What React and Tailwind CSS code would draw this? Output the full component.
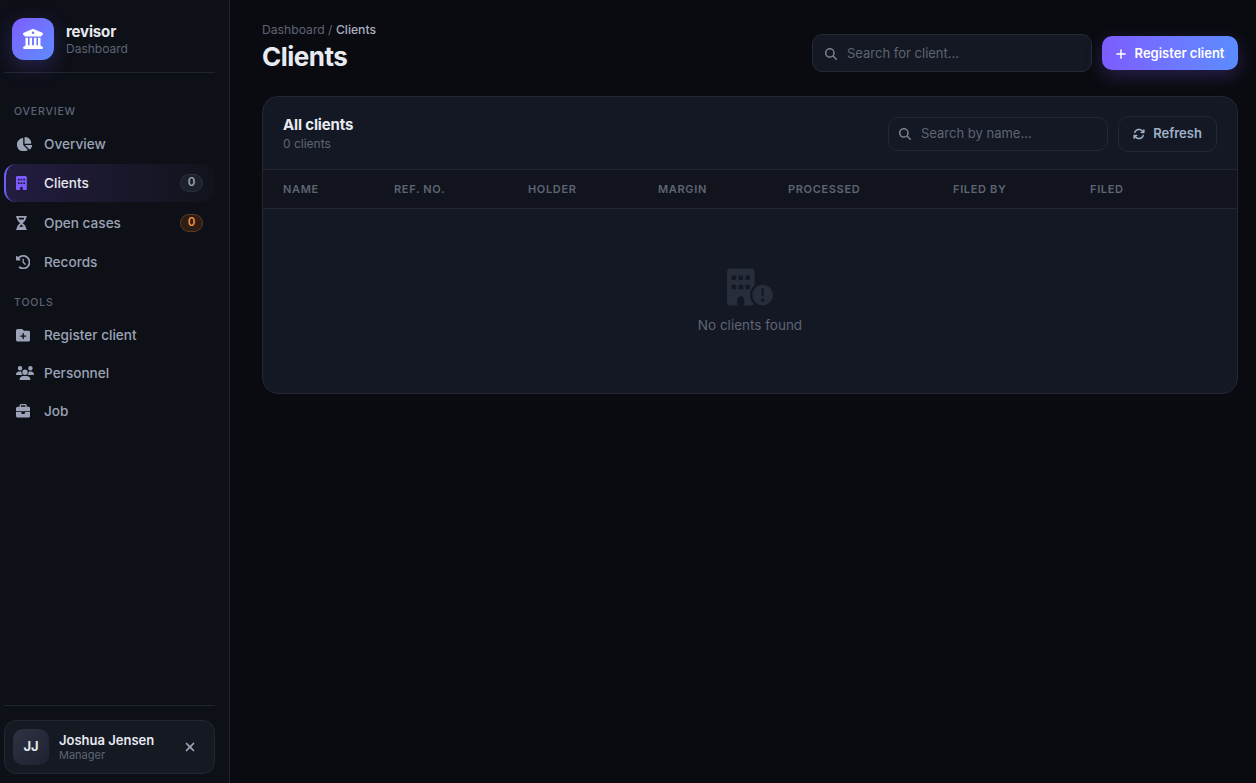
import {
  FaBuildingColumns, FaChartPie, FaBuilding, FaHourglassHalf, FaClockRotateLeft, FaFolderPlus,
  FaUsers, FaBriefcase, FaXmark, FaMagnifyingGlass, FaPlus, FaArrowsRotate, FaBuildingCircleExclamation,
} from 'react-icons/fa6';

function NavItem({ icon: Icon, width, label, badge, active, orange }) {
  return (
    <div
      className={`h-[38px] flex items-center pr-3 text-[13.6px] font-medium rounded-[12px] ${badge ? 'my-px' : ''} ${
        active
          ? 'text-[#e6e8f0] border-l-2 border-[#6d5ef5] pl-[10px] bg-gradient-to-r from-[#231c40] to-[#11131b]'
          : 'text-[#9ca3b6] pl-3'
      }`}
    >
      <span className={`w-[28px] flex ${active ? 'text-[#7c5cff]' : ''}`}>
        <Icon className={`h-[14.4px] ${width}`} />
      </span>
      <span className="flex-1">{label}</span>
      {badge && (
        <span
          className={`w-[23px] h-[18px] rounded-full border flex items-center justify-center text-[11.5px] font-semibold ${
            orange ? 'bg-[#2e1d14] border-[#5c3a20] text-[#f5923e]' : 'bg-[#1c212c] border-[#2a303c] text-[#9ca3b6]'
          }`}
        >
          {badge}
        </span>
      )}
    </div>
  );
}

function SectionLabel({ children, className }) {
  return <div className={`px-[10px] text-[10.5px] font-medium tracking-[0.08em] text-[#5d6475] ${className}`}>{children}</div>;
}

const columns = [
  ['NAME', 'w-[111px]'],
  ['REF. NO.', 'w-[134px]'],
  ['HOLDER', 'w-[130px]'],
  ['MARGIN', 'w-[130px]'],
  ['PROCESSED', 'w-[165px]'],
  ['FILED BY', 'w-[137px]'],
  ['FILED', 'w-[100px]'],
];

export default function App() {
  return (
    <div className="h-[783px] flex bg-[#0a0b10] overflow-hidden font-['Inter',sans-serif]">
      <aside className="w-[230px] shrink-0 bg-[#0d1017] border-r border-[#20242e] pl-[4px] pr-[14px] flex flex-col">
        <div className="h-[73px] border-b border-[#20242e] flex items-center pl-2 pt-[6px]">
          <div className="w-[42px] h-[42px] rounded-[12px] bg-gradient-to-br from-[#7c5cff] to-[#5b8cff] flex items-center justify-center text-white text-[20px] shadow-[0_6px_20px_rgba(124,92,255,0.25)]">
            <FaBuildingColumns />
          </div>
          <div className="ml-3 mt-[2px]">
            <div className="text-[15px] leading-[18px] font-bold tracking-[-0.01em] text-[#e8eaf2]">revisor</div>
            <div className="text-[12px] leading-[16px] text-[#5d6475]">Dashboard</div>
          </div>
        </div>

        <SectionLabel className="mt-[32px] mb-[7px] leading-[13px]">OVERVIEW</SectionLabel>
        <NavItem icon={FaChartPie} width="w-[16.2px]" label="Overview" />
        <NavItem icon={FaBuilding} width="w-[10.8px]" label="Clients" badge="0" active />
        <NavItem icon={FaHourglassHalf} width="w-[10.8px]" label="Open cases" badge="0" orange />
        <NavItem icon={FaClockRotateLeft} width="w-[14.4px]" label="Records" />

        <SectionLabel className="mt-[15px] mb-[7px] leading-[13px]">TOOLS</SectionLabel>
        <NavItem icon={FaFolderPlus} width="w-[14.4px]" label="Register client" />
        <NavItem icon={FaUsers} width="w-[18px]" label="Personnel" />
        <NavItem icon={FaBriefcase} width="w-[14.4px]" label="Job" />

        <div className="mt-auto border-t border-[#20242e] pt-[14px] pb-[9px]">
          <div className="h-[54px] rounded-[12px] border border-[#222732] bg-[#151922] flex items-center pl-2 pr-[17px]">
            <div className="w-9 h-9 rounded-[10px] bg-gradient-to-br from-[#2e3244] to-[#1e2230] flex items-center justify-center text-[13px] font-bold text-[#e6e8f0]">
              JJ
            </div>
            <div className="ml-[10px] flex-1">
              <div className="text-[13px] leading-[16px] font-semibold text-[#e8eaf2]">Joshua Jensen</div>
              <div className="text-[11px] leading-[14px] text-[#5d6475]">Manager</div>
            </div>
            <FaXmark className="text-[#9ca3b6] text-[14px]" />
          </div>
        </div>
      </aside>

      <main className="flex-1 min-w-0 pl-[32px] pr-[18px] pt-[22px]">
        <div className="flex items-start justify-between">
          <div>
            <div className="text-[12.16px] leading-[16px] text-[#5d6475]">
              Dashboard / <span className="text-[#aab0c0] font-medium">Clients</span>
            </div>
            <h1 className="mt-[3px] text-[26px] leading-[32px] font-bold tracking-[-0.02em] text-[#e8eaf2]">Clients</h1>
          </div>
          <div className="flex items-center mt-[12px]">
            <div className="w-[280px] h-[38px] rounded-[10px] border border-[#242936] bg-[#141822] flex items-center pl-3 pt-px">
              <FaMagnifyingGlass className="text-[#7a8090] text-[12px]" />
              <span className="ml-[10px] text-[13px] text-[#5d6475]">Search for client...</span>
            </div>
            <button className="ml-[10px] w-[136px] h-[34px] rounded-[10px] bg-gradient-to-r from-[#7c5cff] to-[#5b8cff] flex items-center justify-center pt-px pr-px text-white text-[13px] font-semibold shadow-[0_6px_18px_rgba(124,92,255,0.25)]">
              <FaPlus className="text-[12px] mr-2" />
              Register client
            </button>
          </div>
        </div>

        <section className="mt-[23px] h-[298px] rounded-[16px] border border-[#222732] bg-[#141824] overflow-hidden">
          <div className="h-[73px] px-5 pt-[2px] flex items-center justify-between border-b border-[#222732]">
            <div>
              <div className="text-[15px] leading-[18px] font-bold tracking-[-0.01em] text-[#e8eaf2]">All clients</div>
              <div className="mt-[2px] text-[12px] leading-[16px] text-[#5d6475]">0 clients</div>
            </div>
            <div className="flex items-center">
              <div className="w-[220px] h-[34px] rounded-[10px] border border-[#222732] flex items-center pl-[10px]">
                <FaMagnifyingGlass className="text-[#7a8090] text-[12px]" />
                <span className="ml-[10px] text-[13px] text-[#5d6475]">Search by name...</span>
              </div>
              <button className="ml-[10px] w-[99px] h-[36px] rounded-[10px] border border-[#222732] flex items-center justify-center text-[13px] font-semibold text-[#9fb0c8]">
                <FaArrowsRotate className="text-[12px] mr-2" />
                Refresh
              </button>
            </div>
          </div>
          <div className="h-[39px] pl-5 flex items-center border-b border-[#222732] bg-[#11141d]">
            {columns.map(([name, width]) => (
              <div key={name} className={`${width} text-[11px] font-semibold tracking-[0.06em] text-[#5d6475]`}>
                {name}
              </div>
            ))}
          </div>
          <div className="flex flex-col items-center pt-[55px]">
            <FaBuildingCircleExclamation className="text-[#272d3b] text-[46px]" />
            <div className="mt-[5px] text-[13.5px] text-[#5d6475]">No clients found</div>
          </div>
        </section>
      </main>
    </div>
  );
}
